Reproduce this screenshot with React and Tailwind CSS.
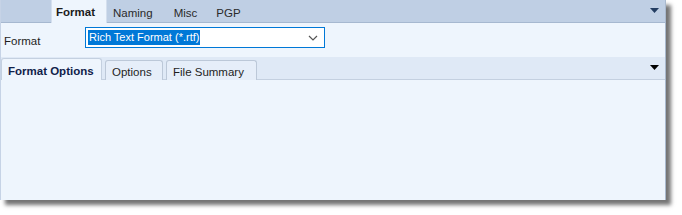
import React from "react";

const font = { fontFamily: '"Liberation Sans", Arial, sans-serif' };

const Caret = ({ className }) => (
  <svg width="9" height="5" viewBox="0 0 9 5" className={className}>
    <path d="M0 0 H9 L4.5 5 Z" fill="currentColor" />
  </svg>
);

const InnerTab = ({ label, active, width }) =>
  active ? (
    <div
      className={`${width} h-[22px] mt-[1px] -mb-[1px] bg-[#eef5fd] border border-b-0 border-[#c4d0e0] rounded-t-[3px] pl-[6px] pt-[4px] text-[11.5px] font-bold text-[#10214a]`}
    >
      {label}
    </div>
  ) : (
    <div
      className={`${width} h-[20px] mt-[3px] bg-[#e6eef9] border border-b-0 border-[#bcc8d8] rounded-t-[3px] pl-[6px] pt-[3px] text-[11.5px] text-[#1e1e1e]`}
    >
      {label}
    </div>
  );

export default function App() {
  return (
    <div className="w-[682px] h-[215px] bg-white" style={font}>
      <div className="w-[666px] h-[200px] flex flex-col bg-[#eef5fd] border-l border-r border-l-[#c6d3e6] border-r-[#a9b9ce] shadow-[5px_5px_4px_rgba(0,0,0,0.55)]">
        {/* top tabs */}
        <div className="h-[23px] flex items-start bg-[#bfcfe4] border-b border-[#a6b8d0] relative">
          <div className="ml-[50px] w-[56px] h-[23px] bg-[#eef5fd] pl-[4px] pt-[4px] text-[11.5px] font-bold text-[#1b1b1b] border-l border-r border-[#d4dfee]">
            Format
          </div>
          <div className="ml-[6px] pt-[5px] text-[11.5px] text-[#2a2a2a]">Naming</div>
          <div className="ml-[21px] pt-[5px] text-[11.5px] text-[#2a2a2a]">Misc</div>
          <div className="ml-[19px] pt-[5px] text-[11.5px] text-[#2a2a2a]">PGP</div>
          <div className="ml-auto mr-[6px] mt-[8px] text-[#233d62]">
            <Caret />
          </div>
        </div>

        {/* format row */}
        <div className="h-[34px] flex items-start">
          <div className="w-[84px] pl-[3px] pt-[10px] text-[11.5px] text-[#1e1e1e]">Format</div>
          <div className="mt-[4px] w-[240px] h-[21px] border border-[#0078d7] bg-white flex items-center pl-[2px] pr-[6px]">
            <span className="bg-[#0078d7] text-white text-[11px] leading-[15px] px-[1px]">
              Rich Text Format (*.rtf)
            </span>
            <svg width="10" height="6" viewBox="0 0 10 6" className="ml-auto">
              <path d="M1 1 L5 5 L9 1" fill="none" stroke="#555" strokeWidth="1.2" />
            </svg>
          </div>
        </div>

        {/* inner tabs */}
        <div className="h-[23px] flex items-start bg-[#dfe9f6] border-b border-[#c4d0e0]">
          <InnerTab label="Format Options" active width="w-[101px]" />
          <div className="w-[3px]" />
          <InnerTab label="Options" width="w-[58px]" />
          <div className="w-[3px]" />
          <InnerTab label="File Summary" width="w-[91px]" />
          <div className="ml-auto mr-[6px] mt-[8px] text-black">
            <Caret />
          </div>
        </div>

        {/* content */}
        <div className="flex-1 bg-[#eef5fd]" />
      </div>
    </div>
  );
}
